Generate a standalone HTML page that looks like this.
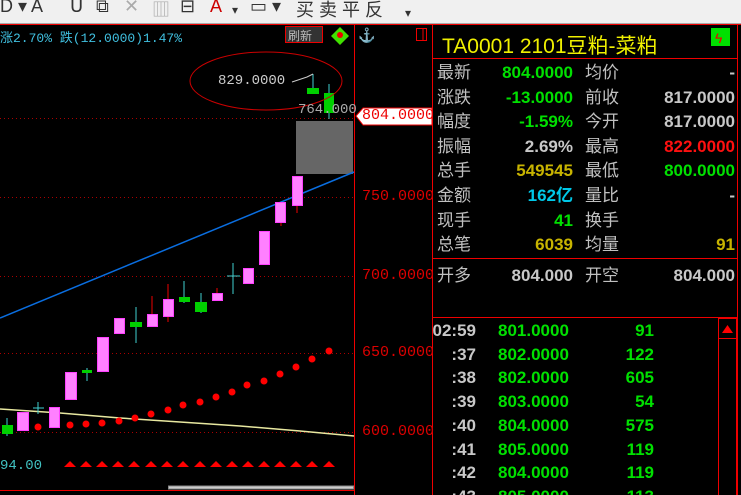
<!DOCTYPE html>
<html style="overflow:hidden"><head><meta charset="utf-8"><style>
html,body{margin:0;width:741px;height:495px;overflow:hidden;background:#000}
body{font-family:"Liberation Sans","Noto Sans CJK SC",sans-serif;position:relative}
.tb{position:absolute;left:0;top:0;width:741px;height:23px;background:#f0f0f0;border-bottom:1px solid #aaa;color:#333;font-size:18px;white-space:nowrap}
.tb span{position:absolute;top:-4px}
.a{position:absolute;white-space:nowrap}
.m{font-family:"Liberation Mono","DejaVu Sans Mono",monospace}
.g{color:#00e000}.w{color:#c8c8c8}.y{color:#c8b400}.c{color:#00c8e8}.rd{color:#ff1010}.l{color:#c0c0c0}
.col{position:absolute;font-size:17px;line-height:24.6px;white-space:nowrap}
.n{font-weight:bold}
</style></head><body>
<div class="tb">
<span style="left:0">D ▾ A</span><span style="left:70px">Ս</span><span style="left:96px">⧉</span><span style="left:124px;color:#aaa">✕</span><span style="left:152px;color:#aaa">▥</span><span style="left:180px">⊟</span><span style="left:210px;color:#c00">A</span><span style="left:232px;font-size:12px;top:3px">▾</span><span style="left:250px">▭ ▾</span><span style="left:296px">买 卖 平 反</span><span style="left:405px;font-size:12px;top:6px">▾</span>
</div>
<svg class="a" style="left:0;top:0" width="741" height="495">
<line x1="0" y1="24.5" x2="741" y2="24.5" stroke="#e00"/>
<line x1="354.5" y1="24" x2="354.5" y2="495" stroke="#e00"/>
<line x1="432.5" y1="24" x2="432.5" y2="495" stroke="#e00"/>
<line x1="737.5" y1="24" x2="737.5" y2="495" stroke="#e00"/>
<line x1="432" y1="58.5" x2="737" y2="58.5" stroke="#e00"/>
<line x1="432" y1="258.5" x2="737" y2="258.5" stroke="#e00"/>
<line x1="432" y1="317.5" x2="737" y2="317.5" stroke="#e00"/>
<line x1="0" y1="490.5" x2="354" y2="490.5" stroke="#e00"/>
<rect x="718.5" y="318.5" width="18" height="177" fill="none" stroke="#e00"/>
<line x1="718" y1="338.5" x2="737" y2="338.5" stroke="#e00"/>
<polygon points="722,333 733,333 727.5,325" fill="#f00"/>
<g stroke="#a00" stroke-dasharray="1,3">
<line x1="0" y1="118.5" x2="354" y2="118.5"/><line x1="0" y1="197.5" x2="354" y2="197.5"/><line x1="0" y1="276.5" x2="354" y2="276.5"/><line x1="0" y1="353.5" x2="354" y2="353.5"/><line x1="0" y1="432.5" x2="354" y2="432.5"/>
</g>
<rect x="296" y="121" width="57" height="53" fill="#666"/>
<line x1="0" y1="318" x2="354" y2="172" stroke="#0a6ee0" stroke-width="1.5"/>
<polyline points="0,409 60,413 120,418 180,422 240,426 300,431 354,436" fill="none" stroke="#e8e8a0" stroke-width="1.5"/>
<g stroke="#40d0d0" stroke-width="1">
<line x1="7" y1="418" x2="7" y2="436"/><line x1="38" y1="402" x2="38" y2="414"/><line x1="33" y1="408" x2="44" y2="408"/>
<line x1="87" y1="368" x2="87" y2="381"/><line x1="136" y1="307" x2="136" y2="343"/><line x1="184" y1="281" x2="184" y2="303"/><line x1="201" y1="293" x2="201" y2="313"/>
<line x1="233" y1="263" x2="233" y2="294"/><line x1="227" y1="276" x2="240" y2="276"/>
<line x1="313" y1="74" x2="313" y2="94"/><line x1="329" y1="84" x2="329" y2="119"/>
</g>
<g stroke="#e00"><line x1="152" y1="296" x2="152" y2="314"/><line x1="168" y1="284" x2="168" y2="322"/><line x1="217" y1="288" x2="217" y2="293"/><line x1="281" y1="222" x2="281" y2="226"/><line x1="297" y1="205" x2="297" y2="213"/></g>
<g fill="#ff80ff" stroke="#ff40ff">
<rect x="17.5" y="412.5" width="11" height="18"/><rect x="49.5" y="407.5" width="10" height="20"/><rect x="65.5" y="372.5" width="11" height="27"/><rect x="97.5" y="337.5" width="11" height="34"/><rect x="114.5" y="318.5" width="10" height="15"/><rect x="147.5" y="314.5" width="10" height="12"/><rect x="163.5" y="299.5" width="10" height="17"/><rect x="212.5" y="293.5" width="10" height="7"/><rect x="243.5" y="268.5" width="10" height="15"/><rect x="259.5" y="231.5" width="10" height="33"/><rect x="275.5" y="202.5" width="10" height="20"/><rect x="292.5" y="176.5" width="10" height="29"/>
</g>
<g fill="#00d000"><rect x="2" y="425" width="11" height="9"/><rect x="82" y="370" width="10" height="3"/><rect x="130" y="322" width="12" height="5"/><rect x="179" y="297" width="11" height="5"/><rect x="195" y="302" width="12" height="10"/><rect x="307" y="88" width="12" height="6"/><rect x="324" y="93" width="10" height="20"/></g>
<g fill="#f00">
<circle cx="38" cy="427" r="3.5"/><circle cx="70" cy="425" r="3.5"/><circle cx="86" cy="424" r="3.5"/><circle cx="102" cy="423" r="3.5"/><circle cx="119" cy="421" r="3.5"/><circle cx="135" cy="418" r="3.5"/><circle cx="151" cy="414" r="3.5"/><circle cx="168" cy="410" r="3.5"/><circle cx="183" cy="405" r="3.5"/><circle cx="200" cy="402" r="3.5"/><circle cx="216" cy="397" r="3.5"/><circle cx="232" cy="392" r="3.5"/><circle cx="247" cy="385" r="3.5"/><circle cx="264" cy="381" r="3.5"/><circle cx="280" cy="374" r="3.5"/><circle cx="296" cy="367" r="3.5"/><circle cx="312" cy="359" r="3.5"/><circle cx="329" cy="351" r="3.5"/>
<polygon points="64,467 76,467 70,461"/><polygon points="80,467 92,467 86,461"/><polygon points="96,467 108,467 102,461"/><polygon points="112,467 124,467 118,461"/><polygon points="128,467 140,467 134,461"/><polygon points="145,467 157,467 151,461"/><polygon points="161,467 173,467 167,461"/><polygon points="177,467 189,467 183,461"/><polygon points="194,467 206,467 200,461"/><polygon points="210,467 222,467 216,461"/><polygon points="226,467 238,467 232,461"/><polygon points="242,467 254,467 248,461"/><polygon points="258,467 270,467 264,461"/><polygon points="274,467 286,467 280,461"/><polygon points="290,467 302,467 296,461"/><polygon points="306,467 318,467 312,461"/><polygon points="323,467 335,467 329,461"/>
</g>
<ellipse cx="266" cy="81" rx="76" ry="29" fill="none" stroke="#c00"/>
<polyline points="292,82 307,77 313,74" fill="none" stroke="#ccc"/>
<rect x="168.5" y="486" width="185" height="3" fill="#ccc" stroke="#888"/>
<rect x="285.5" y="26.5" width="37" height="16" fill="#333" stroke="#e00"/>
<polygon points="340,27 349,36 340,45 331,36" fill="#40e000"/><circle cx="340" cy="35" r="3" fill="#e00"/>
<rect x="416.5" y="28.5" width="10" height="12" fill="none" stroke="#e00"/><line x1="423" y1="28" x2="423" y2="41" stroke="#e00"/>
<text x="358" y="40" fill="#e00" font-size="14">⚓</text>
<polygon points="356,116 363,108 432,108 432,125 363,125" fill="#fff" stroke="#e00"/>
<rect x="711" y="28" width="19" height="18" fill="#00e000"/><text x="715" y="43" fill="#e00" font-size="14">ϟ</text>
</svg>
<div class="a m" style="left:0;top:27px;font-size:13px;color:#40c0e0">涨2.70% 跌(12.0000)1.47%</div>
<div class="a" style="left:288px;top:27px;font-size:12px;color:#bbb">刷新</div>
<div class="a m" style="left:218px;top:73px;font-size:14px;color:#ccc">829.0000</div>
<div class="a m" style="left:298px;top:102px;font-size:14px;color:#aaa">764.000</div>
<div class="a m" style="left:362px;top:107px;font-size:15px;color:#e00">804.0000</div>
<div class="a m" style="left:362px;top:188px;font-size:15px;color:#d00">750.0000</div>
<div class="a m" style="left:362px;top:267px;font-size:15px;color:#d00">700.0000</div>
<div class="a m" style="left:362px;top:344px;font-size:15px;color:#d00">650.0000</div>
<div class="a m" style="left:362px;top:423px;font-size:15px;color:#d00">600.0000</div>
<div class="a m" style="left:0;top:458px;font-size:14px;color:#40c0c0">94.00</div>
<div class="a" style="left:442px;top:30px;width:228px;overflow:hidden;font-size:21px;color:#f0f000">TA0001 2101豆粕-菜粕</div>
<div class="col l" style="left:437px;top:61px">最新<br>涨跌<br>幅度<br>振幅<br>总手<br>金额<br>现手<br>总笔</div>
<div class="col l" style="left:585px;top:61px">均价<br>前收<br>今开<br>最高<br>最低<br>量比<br>换手<br>均量</div>
<div class="col n" style="right:168px;top:61px;text-align:right"><span class="g">804.0000</span><br><span class="g">-13.0000</span><br><span class="g">-1.59%</span><br><span class="w">2.69%</span><br><span class="y">549545</span><br><span class="c">162亿</span><br><span class="g">41</span><br><span class="y">6039</span></div>
<div class="col n" style="right:6px;top:61px;text-align:right"><span class="w">-</span><br><span class="w">817.0000</span><br><span class="w">817.0000</span><br><span class="rd">822.0000</span><br><span class="g">800.0000</span><br><span class="w">-</span><br>&nbsp;<br><span class="y">91</span></div>
<div class="col l" style="left:437px;top:264px">开多</div><div class="col w n" style="right:168px;top:264px">804.000</div>
<div class="col l" style="left:585px;top:264px">开空</div><div class="col w n" style="right:6px;top:264px">804.000</div>
<div class="col w n" style="right:265px;top:319px;line-height:23.7px;text-align:right">02:59<br>:37<br>:38<br>:39<br>:40<br>:41<br>:42<br>:43</div>
<div class="col g n" style="left:498px;top:319px;line-height:23.7px">801.0000<br>802.0000<br>802.0000<br>803.0000<br>804.0000<br>805.0000<br>804.0000<br>805.0000</div>
<div class="col g n" style="right:87px;top:319px;line-height:23.7px;text-align:right">91<br>122<br>605<br>54<br>575<br>119<br>119<br>113</div>
</body></html>
